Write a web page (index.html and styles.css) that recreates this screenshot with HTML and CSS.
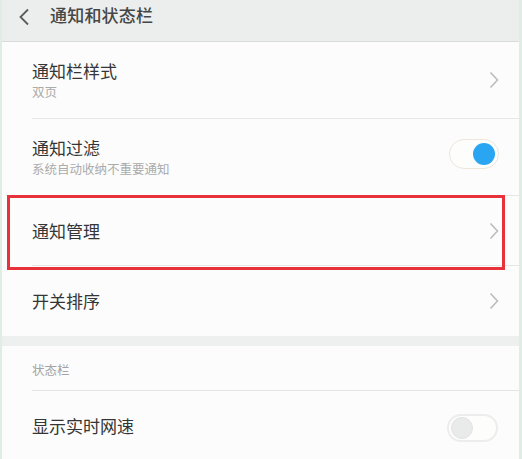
FILE: index.html
```html
<!DOCTYPE html>
<html lang="zh-CN">
<head>
<meta charset="utf-8">
<title>通知和状态栏</title>
<link rel="stylesheet" href="styles.css">
</head>
<body>
<div class="screen">
  <header class="topbar">
    <svg class="back" width="12" height="18" viewBox="0 0 12 18"><path d="M10 1.5 L2.5 9 L10 16.5" fill="none" stroke="#5a5c5b" stroke-width="1.8"/></svg>
    <span class="topbar-title">通知和状态栏</span>
  </header>

  <div class="row row-tall">
    <div class="texts">
      <div class="title">通知栏样式</div>
      <div class="sub">双页</div>
    </div>
    <svg class="chev" width="10" height="18" viewBox="0 0 10 18"><path d="M1.5 1.5 L8.5 9 L1.5 16.5" fill="none" stroke="#b9bbba" stroke-width="1.5"/></svg>
  </div>

  <div class="row row-tall">
    <div class="texts">
      <div class="title">通知过滤</div>
      <div class="sub">系统自动收纳不重要通知</div>
    </div>
    <div class="toggle on"><span class="knob"></span></div>
  </div>

  <div class="row row-single highlighted">
    <div class="texts"><div class="title">通知管理</div></div>
    <svg class="chev" width="10" height="18" viewBox="0 0 10 18"><path d="M1.5 1.5 L8.5 9 L1.5 16.5" fill="none" stroke="#b9bbba" stroke-width="1.5"/></svg>
    <div class="redbox"></div>
  </div>

  <div class="row row-single last">
    <div class="texts"><div class="title">开关排序</div></div>
    <svg class="chev" width="10" height="18" viewBox="0 0 10 18"><path d="M1.5 1.5 L8.5 9 L1.5 16.5" fill="none" stroke="#b9bbba" stroke-width="1.5"/></svg>
  </div>

  <div class="gap"></div>

  <div class="section-head">状态栏</div>

  <div class="row row-single">
    <div class="texts"><div class="title">显示实时网速</div></div>
    <div class="toggle off"><span class="knob"></span></div>
  </div>
</div>
</body>
</html>
```

FILE: styles.css
```css
html, body {
  margin: 0;
  padding: 0;
  background: #fbfcfb;
}
body {
  font-family: "Noto Sans CJK SC", "Noto Sans", sans-serif;
  color: #333;
}
.screen {
  width: 522px;
  height: 459px;
  box-sizing: border-box;
  border-left: 2px solid #e0ede4;
  border-right: 3px solid #e0ede4;
  overflow: hidden;
  background: #fbfcfb;
}
.topbar {
  height: 41px;
  background: #eceeed;
  border-bottom: 1px solid #d9dbda;
  display: flex;
  align-items: center;
  padding-left: 16px;
  box-sizing: content-box;
}
.back {
  margin-top: -8px;
  flex: none;
}
.topbar-title {
  margin-left: 20px;
  margin-top: -12px;
  font-size: 17px;
  font-weight: 500;
  color: #454746;
  letter-spacing: 0.2px;
}
.row {
  position: relative;
  display: flex;
  align-items: center;
  margin-left: 30px;
  padding-right: 20px;
  border-bottom: 1px solid #e6e8e7;
}
.row-tall { height: 76px; }
.row-single { height: 69px; }
.row.last { border-bottom: none; height: 70px; }
.texts { flex: 1; }
.title {
  font-size: 17px;
  line-height: 22px;
  color: #353535;
}
.row-tall .title { margin-top: 0; }
.sub {
  font-size: 12.5px;
  line-height: 18px;
  margin-top: 1px;
  color: #ababab;
}
.chev { flex: none; }
.toggle {
  flex: none;
  width: 48px;
  height: 28px;
  border-radius: 15px;
  border: 1px solid #e6e6e3;
  background: #fdfdfc;
  position: relative;
}
.toggle .knob {
  position: absolute;
  top: 3px;
  width: 22px;
  height: 22px;
  border-radius: 50%;
}
.toggle.on { border-color: #ede6dc; margin-top: -6px; }
.toggle.on .knob { right: 3px; background: #2aa5f2; }
.toggle.off { border: 2px solid #ededed; width: 47px; height: 24px; margin-top: 4px; margin-right: 1px; }
.toggle.off .knob { left: 2px; top: 1px; background: #e9ebea; border: 1px solid #e2e4e3; width: 20px; height: 20px; }
.redbox {
  position: absolute;
  left: -25px;
  top: -1px;
  width: 498px;
  height: 75px;
  box-sizing: border-box;
  border: 3.5px solid #e8323b;
  pointer-events: none;
}
.gap {
  height: 10px;
  background: #eef0ef;
}
.section-head {
  margin-left: 30px;
  height: 45px;
  line-height: 48px;
  font-size: 12.5px;
  color: #a3a3a3;
  border-bottom: 1px solid #e3e5e4;
  box-sizing: border-box;
}
```
